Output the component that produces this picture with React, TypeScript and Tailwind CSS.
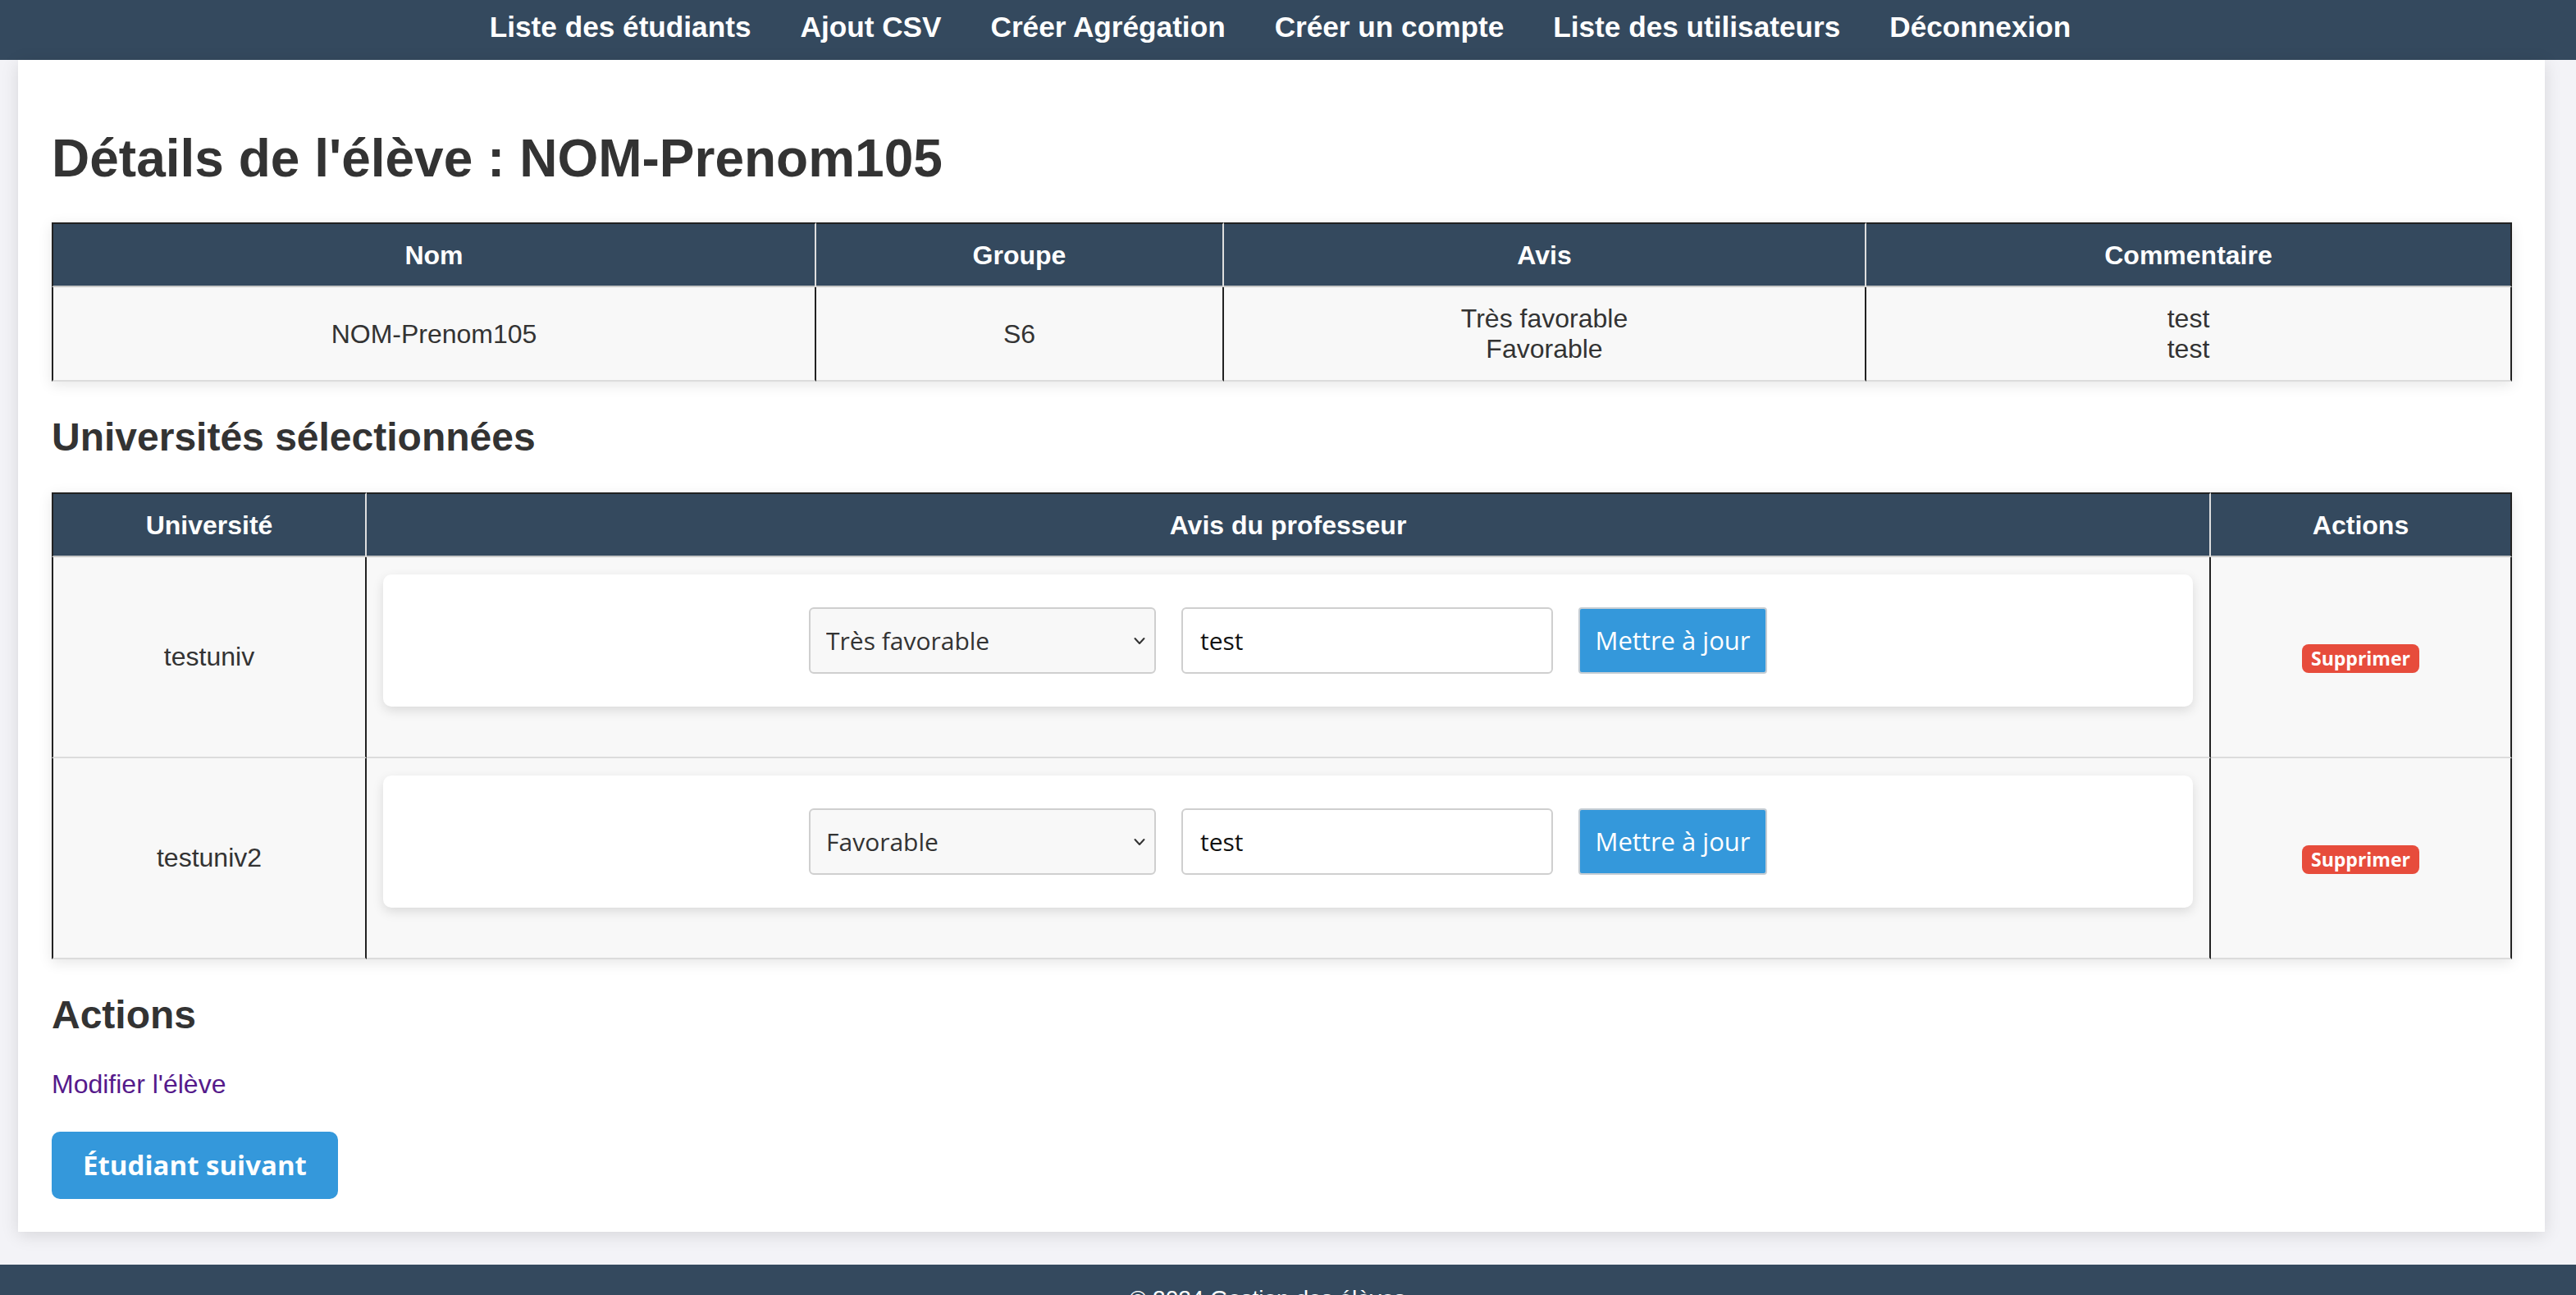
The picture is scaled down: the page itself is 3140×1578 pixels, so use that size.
import React from "react";

const navItems = [
  "Liste des étudiants",
  "Ajout CSV",
  "Créer Agrégation",
  "Créer un compte",
  "Liste des utilisateurs",
  "Déconnexion",
];

function Chevron() {
  return (
    <svg
      className="absolute right-[13px] top-1/2 -translate-y-1/2 pointer-events-none"
      width="14"
      height="10"
      viewBox="0 0 14 10"
      fill="none"
    >
      <path d="M1.5 2 L7 8 L12.5 2" stroke="#333" strokeWidth="2" strokeLinecap="round" strokeLinejoin="round" />
    </svg>
  );
}

function AvisForm({ value }: { value: string }) {
  return (
    <div className="bg-white rounded-[10px] shadow-[0_5px_14px_rgba(0,0,0,0.12)] p-[40px] mb-[40px] flex justify-center items-center gap-[31px] font-['Open_Sans',sans-serif]">
      <div className="relative w-[423px] h-[81px]">
        <select
          defaultValue={value}
          className="appearance-none w-full h-full bg-[#f8f8f8] border-2 border-[#cfcfcf] rounded-[6px] pl-[19px] pr-[40px] text-[30px] text-[#333] font-['Open_Sans',sans-serif] outline-none"
        >
          <option>Très favorable</option>
          <option>Favorable</option>
          <option>Défavorable</option>
        </select>
        <Chevron />
      </div>
      <input
        defaultValue="test"
        className="w-[453px] h-[81px] bg-white border-2 border-[#cfcfcf] rounded-[6px] pl-[21px] text-[30px] text-[#111] font-['Open_Sans',sans-serif] outline-none"
      />
      <button className="w-[230px] h-[81px] bg-[#3498db] border-2 border-[#c6cdd3] rounded-[4px] text-white text-[31px] font-['Open_Sans',sans-serif]">
        Mettre à jour
      </button>
    </div>
  );
}

export default function App() {
  const thBase =
    "bg-[#34495e] text-white font-bold text-[32px] leading-[37px] pt-[20px] pb-[18px] text-center border-t-2 border-t-[#222] border-b-2 border-b-[#c8c8c8]";
  const tdBase =
    "bg-[#f8f8f8] text-[32px] leading-[37px] text-center align-middle border-b-2 border-b-[#dcdcdc] border-r-2 border-r-[#222]";
  return (
    <div className="min-h-screen bg-[#f3f3f7] font-['Liberation_Sans',Arial,sans-serif] text-[#333]">
      <nav className="h-[73px] bg-[#34495e] flex justify-center gap-[60px] pt-[13px] pr-[19px]">
        {navItems.map((i) => (
          <a key={i} className="text-white font-bold text-[35.2px] leading-[40px] whitespace-nowrap cursor-pointer">
            {i}
          </a>
        ))}
      </nav>

      <main className="ml-[22px] w-[3080px] bg-white shadow-[0_4px_20px_rgba(0,0,0,0.12)] pl-[41px] pr-[40px] pt-[83px] pb-[40px]">
        <h1 className="text-[64px] leading-[74px] font-bold text-[#333]">Détails de l'élève : NOM-Prenom105</h1>

        <table className="mt-[41px] w-[2999px] table-fixed border-separate border-spacing-0 shadow-[0_4px_16px_rgba(0,0,0,0.1)]">
          <colgroup>
            <col className="w-[932px]" />
            <col className="w-[497px]" />
            <col className="w-[783px]" />
            <col className="w-[787px]" />
          </colgroup>
          <thead>
            <tr>
              <th className={`${thBase} border-l-2 border-l-[#222] border-r-2 border-r-[#dedede]`}>Nom</th>
              <th className={`${thBase} border-r-2 border-r-[#dedede]`}>Groupe</th>
              <th className={`${thBase} border-r-2 border-r-[#dedede]`}>Avis</th>
              <th className={`${thBase} border-r-2 border-r-[#222]`}>Commentaire</th>
            </tr>
          </thead>
          <tbody>
            <tr>
              <td className={`${tdBase} border-l-2 border-l-[#222] pt-[20px] pb-[19px]`}>NOM-Prenom105</td>
              <td className={`${tdBase} pt-[20px] pb-[19px]`}>S6</td>
              <td className={`${tdBase} pt-[20px] pb-[19px]`}>
                Très favorable
                <br />
                Favorable
              </td>
              <td className={`${tdBase} pt-[20px] pb-[19px]`}>
                test
                <br />
                test
              </td>
            </tr>
          </tbody>
        </table>

        <h2 className="mt-[40px] text-[48px] leading-[55px] font-bold text-[#333]">Universités sélectionnées</h2>

        <table className="mt-[40px] w-[2999px] table-fixed border-separate border-spacing-0 shadow-[0_4px_16px_rgba(0,0,0,0.1)]">
          <colgroup>
            <col className="w-[384px]" />
            <col className="w-[2248px]" />
            <col className="w-[367px]" />
          </colgroup>
          <thead>
            <tr>
              <th className={`${thBase} border-l-2 border-l-[#222] border-r-2 border-r-[#dedede]`}>Université</th>
              <th className={`${thBase} border-r-2 border-r-[#dedede]`}>Avis du professeur</th>
              <th className={`${thBase} border-r-2 border-r-[#222]`}>Actions</th>
            </tr>
          </thead>
          <tbody>
            {[
              { u: "testuniv", v: "Très favorable" },
              { u: "testuniv2", v: "Favorable" },
            ].map((r) => (
              <tr key={r.u}>
                <td className={`${tdBase} border-l-2 border-l-[#222] p-[20px]`}>{r.u}</td>
                <td className={`${tdBase} pt-[21px] pb-[21px] px-[20px]`}>
                  <AvisForm value={r.v} />
                </td>
                <td className={`${tdBase} p-[20px]`}>
                  <span className="inline-block bg-[#e74c3c] text-white font-bold text-[23px] leading-[27px] px-[11px] py-[4px] rounded-[8px] font-['Open_Sans',sans-serif]">
                    Supprimer
                  </span>
                </td>
              </tr>
            ))}
          </tbody>
        </table>

        <h2 className="mt-[40px] text-[48px] leading-[55px] font-bold text-[#333]">Actions</h2>

        <div className="mt-[39px] text-[32px] leading-[37px]">
          <a className="text-[#551a8b] cursor-pointer">Modifier l'élève</a>
        </div>

        <button className="mt-[39px] block w-[349px] h-[82px] bg-[#3498db] rounded-[10px] text-white font-bold text-[33px] font-['Open_Sans',sans-serif]">
          Étudiant suivant
        </button>
      </main>

      <footer className="mt-[40px] bg-[#34495e] h-[100px] pt-[26px] pr-[50px] text-center text-white text-[28px] leading-[32px]">
        © 2024 Gestion des élèves
      </footer>
    </div>
  );
}
